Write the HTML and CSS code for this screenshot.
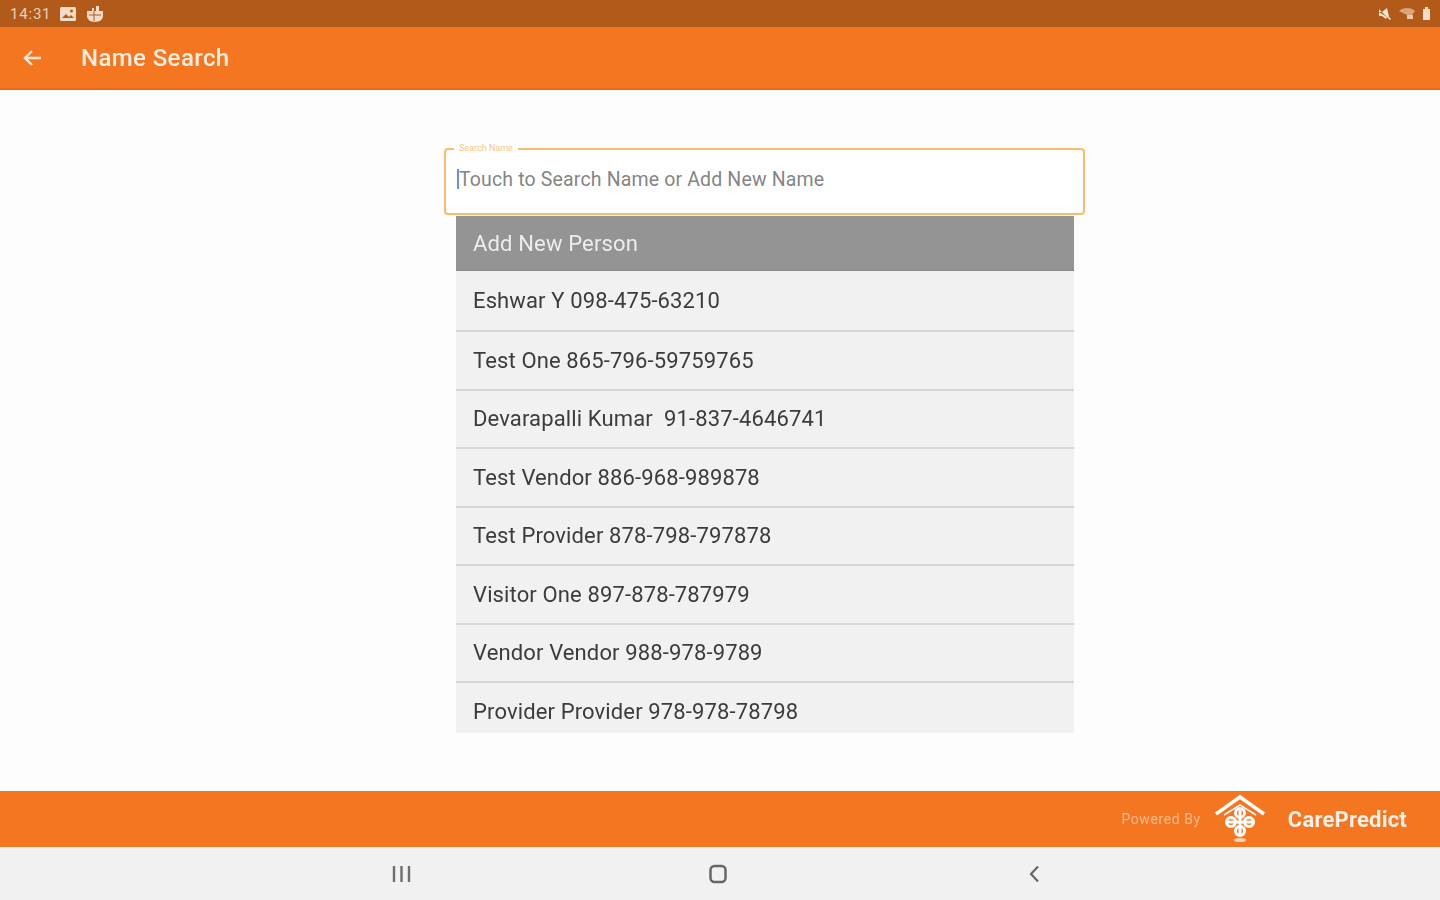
FILE: index.html
```html
<!DOCTYPE html>
<html lang="en">
  <head>
    <meta charset="UTF-8" />
    <meta name="viewport" content="width=device-width, initial-scale=1.0" />
    <title>Name Search</title>
    <link rel="stylesheet" href="styles.css">
  </head>
  <body>
    <div class="screen">
      <div class="status-bar">
        <div class="status-left">
          <span class="clock">14:31</span>
          <svg class="status-icon" width="18" height="16" viewBox="0 0 18 16">
            <rect x="1" y="1" width="16" height="14" rx="1.5" fill="#f3dcc8" />
            <path d="M3 12l4-4 3 3 2-2 3 3z" fill="#b25a1a" />
            <circle cx="12.5" cy="5" r="1.5" fill="#b25a1a" />
          </svg>
          <svg class="status-icon" width="20" height="18" viewBox="0 0 20 18">
            <path d="M2 6h5V3h2v3h2V1h3v5h4v5c0 3-3 6-8 6s-8-3-8-6z" fill="#f3dcc8" />
            <path d="M9 6v10M4 10h12" stroke="#b25a1a" stroke-width="1" />
          </svg>
        </div>
        <div class="status-right">
          <svg width="14" height="14" viewBox="0 0 14 14">
            <path d="M1 5h3l5-4 2 9 2 2-1 1L1 2z" fill="#f8e6d6" />
            <path d="M1 5v4h3l4 3 1-2z" fill="#f8e6d6" />
          </svg>
          <svg width="18" height="13" viewBox="0 0 18 13">
            <path d="M1 4c4-4 12-4 16 0l-3 4H9z" fill="#d9a67c" />
            <path d="M9 8h6v4H9z" fill="#ecc5a5" />
          </svg>
          <svg width="9" height="13" viewBox="0 0 9 13">
            <path d="M3 0h3v2h2v11H1V2h2z" fill="#f3dcc8" />
          </svg>
        </div>
      </div>

      <header class="toolbar">
        <svg class="back-icon" width="20" height="18" viewBox="0 0 20 18">
          <path d="M19 9H3M10 2L3 9l7 7" fill="none" stroke="#fbe6d6" stroke-width="2.4" />
        </svg>
        <h1>Name Search</h1>
      </header>

      <main class="content">
        <div class="search-box">
          <span class="search-label">Search Name</span>
          <span class="caret"></span>
          <span class="placeholder">Touch to Search Name or Add New Name</span>
        </div>
        <div class="results">
          <div class="add-person">Add New Person</div>
          <div class="result-row">Eshwar Y 098-475-63210</div>
          <div class="result-row">Test One 865-796-59759765</div>
          <div class="result-row">Devarapalli Kumar&nbsp; 91-837-4646741</div>
          <div class="result-row">Test Vendor 886-968-989878</div>
          <div class="result-row">Test Provider 878-798-797878</div>
          <div class="result-row">Visitor One 897-878-787979</div>
          <div class="result-row">Vendor Vendor 988-978-9789</div>
          <div class="result-row last">Provider Provider 978-978-78798</div>
        </div>
      </main>

      <footer class="powered">
        <span class="powered-by">Powered By</span>
        <svg class="logo" width="52" height="52" viewBox="0 0 52 52">
          <path d="M2 21L26 4l24 17" fill="none" stroke="#fff" stroke-width="3.5" />
          <path d="M10 22L26 12l16 10" fill="none" stroke="#fff" stroke-width="1.5" />
          <g fill="none" stroke="#fff" stroke-width="3">
            <circle cx="26" cy="20" r="4.5" />
            <circle cx="26" cy="38" r="4.5" />
            <circle cx="17" cy="29" r="4.5" />
            <circle cx="35" cy="29" r="4.5" />
            <path d="M26 16v26M13 29h26" />
          </g>
          <ellipse cx="26" cy="47" rx="6" ry="2" fill="#fbd3b5" />
        </svg>
        <span class="brand">CarePredict</span>
      </footer>

      <nav class="nav-bar">
        <svg width="20" height="16" viewBox="0 0 20 16">
          <path d="M2 0v16M9.5 0v16M17 0v16" stroke="#6e6e6e" stroke-width="2.4" />
        </svg>
        <svg width="20" height="20" viewBox="0 0 20 20">
          <rect x="2.5" y="2" width="15" height="16" rx="4" fill="none" stroke="#666" stroke-width="2.5" />
        </svg>
        <svg width="12" height="18" viewBox="0 0 12 18">
          <path d="M10 1.5L3 9l7 7.5" fill="none" stroke="#666" stroke-width="2.2" />
        </svg>
      </nav>
    </div>
  </body>
</html>
```

FILE: styles.css
```css
* {
  margin: 0;
  padding: 0;
  box-sizing: border-box;
}

html,
body {
  height: 100%;
  overflow: hidden;
}

body {
  font-family: Roboto, "Liberation Sans", sans-serif;
  background-color: #fdfdfd;
}

/* the source is an upscaled thumbnail, so everything is a little soft */
.screen {
  display: flex;
  flex-direction: column;
  height: 900px;
  filter: blur(0.7px);
}

.status-bar {
  display: flex;
  justify-content: space-between;
  align-items: center;
  height: 27px;
  padding: 0 9px 0 10px;
  background-color: #b25a1a;
}

.status-left,
.status-right {
  display: flex;
  align-items: center;
}

.status-left {
  gap: 8px;
}

.status-right {
  gap: 6px;
}

.clock {
  font-size: 15px;
  letter-spacing: 0.8px;
  color: #ecd0b8;
}

.toolbar {
  display: flex;
  align-items: center;
  height: 63px;
  padding-left: 22px;
  background-color: #f57621;
  border-bottom: 2px solid #ee6a12;
}

.toolbar h1 {
  margin-left: 39px;
  font-size: 24px;
  font-weight: 500;
  letter-spacing: 0.4px;
  color: #fdeee2;
}

.content {
  flex: 1;
  padding: 58px 0 0 444px;
}

.search-box {
  position: relative;
  display: flex;
  align-items: center;
  width: 641px;
  height: 67px;
  padding: 0 0 5px 11px;
  background-color: #fff;
  border: 2px solid #f5bd6c;
  border-radius: 4px;
}

.search-label {
  position: absolute;
  top: -7px;
  left: 8px;
  padding: 0 5px;
  font-size: 9px;
  line-height: 10px;
  color: #f0c98c;
  background-color: #fdfdfd;
}

.caret {
  width: 2px;
  height: 20px;
  background-color: #6f8fe0;
}

.placeholder {
  font-size: 19.5px;
  letter-spacing: 0.15px;
  color: #858585;
}

.results {
  width: 618px;
  margin: 1px 0 0 12px;
}

.add-person {
  display: flex;
  align-items: center;
  height: 55px;
  padding-left: 17px;
  font-size: 22px;
  letter-spacing: 0.15px;
  color: #ececec;
  background-color: #949494;
  border-bottom: 1px solid #8a8a8a;
}

.result-row {
  display: flex;
  align-items: center;
  height: 58.5px;
  padding-left: 17px;
  font-size: 22px;
  letter-spacing: 0.13px;
  color: #3c3c3c;
  background-color: #f1f1f1;
  border-bottom: 2px solid #d6d6d6;
}

.add-person + .result-row {
  height: 61px;
}

.result-row.last {
  height: 50px;
  padding-top: 7px;
  border-bottom: none;
}

.powered {
  display: flex;
  align-items: center;
  height: 56px;
  padding-right: 33px;
  justify-content: flex-end;
  background-color: #f57621;
}

.powered-by {
  font-size: 14px;
  letter-spacing: 0.6px;
  color: #f9b98c;
}

.logo {
  margin: 0 22px 0 13px;
}

.brand {
  font-size: 22px;
  font-weight: 700;
  letter-spacing: 0.2px;
  color: #fdf0e6;
}

.nav-bar {
  display: grid;
  grid-template-columns: repeat(3, 316px);
  justify-content: center;
  justify-items: center;
  align-items: center;
  height: 53px;
  padding-right: 4px;
  background-color: #f2f1f1;
}
```
